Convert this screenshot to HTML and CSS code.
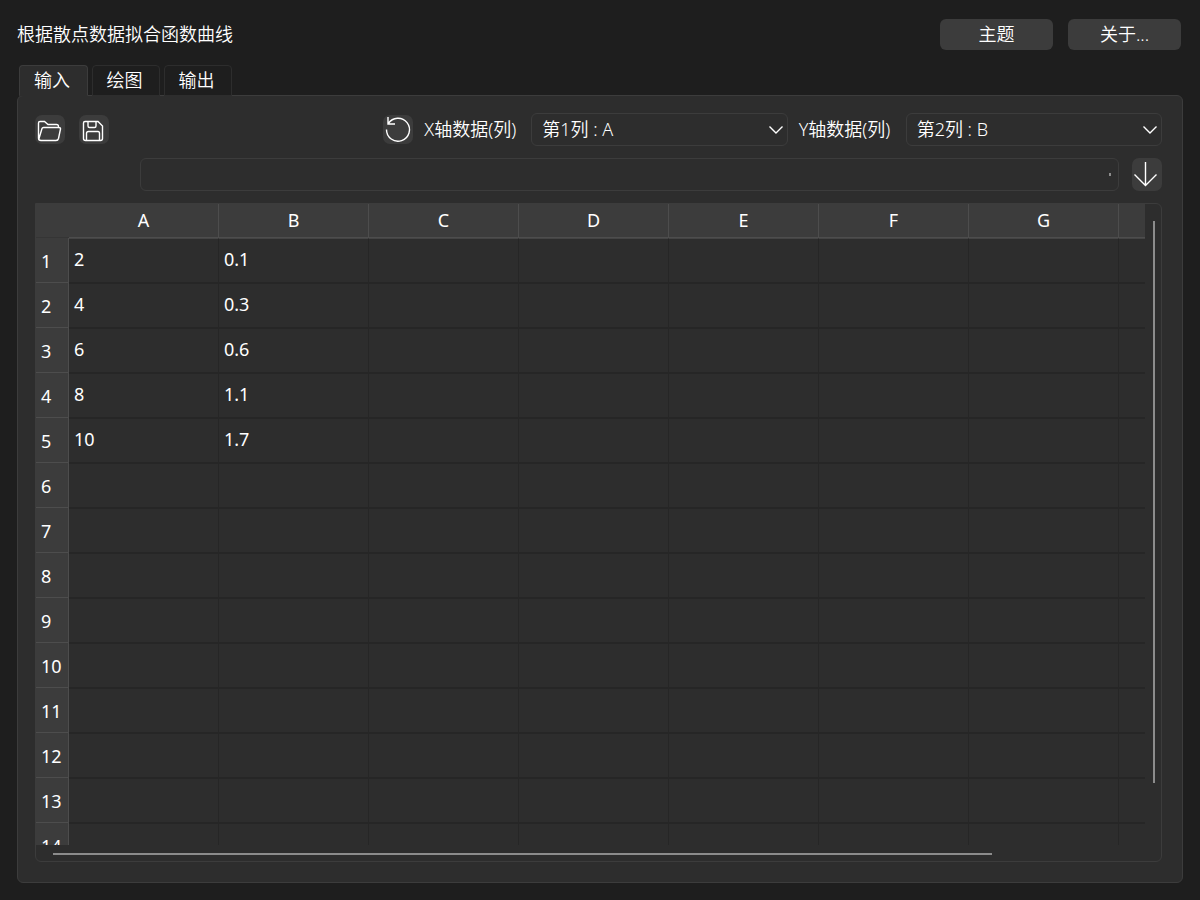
FILE: index.html
```html
<!DOCTYPE html>
<html lang="zh-CN">
<head>
<meta charset="utf-8">
<meta name="viewport" content="width=device-width, initial-scale=1">
<title>根据散点数据拟合函数曲线</title>
<link rel="stylesheet" href="styles.css">
</head>
<body>
<header class="titlebar">
  <h1 class="title">根据散点数据拟合函数曲线</h1>
  <div class="title-actions">
    <button class="button" type="button">主题</button>
    <button class="button" type="button">关于...</button>
  </div>
</header>
<nav class="tabs" role="tablist">
  <button class="tab tab-active" type="button" role="tab" aria-selected="true">输入</button>
  <button class="tab" type="button" role="tab" aria-selected="false">绘图</button>
  <button class="tab" type="button" role="tab" aria-selected="false">输出</button>
</nav>
<main class="panel">
  <div class="toolbar">
    <div class="file-actions">
      <button class="icon-button" type="button" aria-label="打开">
        <svg width="30" height="29" viewBox="0 0 30 29"><path d="M4.500 23.500 3.500 21V8Q3.500 6.500 5 6.500H9.500L13 9.500H21.500Q23.500 9.500 23.500 11.500V12.500M4 23.500 7 13.500Q7.300 12.500 8.500 12.500H23.500Q25.800 12.500 25.500 14L23.500 23.500Q23 25.500 21 25.500H6Q3.500 25.500 3.500 23V20"/></svg>
      </button>
      <button class="icon-button" type="button" aria-label="保存">
        <svg width="30" height="29" viewBox="0 0 30 29"><path d="M4.500 8Q4.500 6.500 6 6.500H19L23.500 11V23.500Q23.500 25.500 21.500 25.500H6.500Q4.500 25.500 4.500 23.500ZM9 6.500V11Q9 12.500 10.500 12.500H15.500Q17 12.500 17 11V6.500M7.500 25.500V18.500Q7.500 16.500 9.500 16.500H19Q20.500 16.500 20.500 18.500V25.500"/></svg>
      </button>
    </div>
    <div class="spacer"></div>
    <button class="icon-button" type="button" aria-label="重置">
      <svg width="30" height="29" viewBox="0 0 30 29"><path d="M5 2V9H12M5.300 8.500A11.500 11.500 0 1 1 3.500 14.500"/></svg>
    </button>
    <label class="field-label" for="x-column">X轴数据(列)</label>
    <div class="select-wrap">
      <select class="select" id="x-column"><option>第1列 : A</option></select>
      <svg class="chevron" width="16" height="10" viewBox="0 0 16 10"><path d="M1.500 1.500 8 8 14.500 1.500"/></svg>
    </div>
    <label class="field-label" for="y-column">Y轴数据(列)</label>
    <div class="select-wrap">
      <select class="select" id="y-column"><option>第2列 : B</option></select>
      <svg class="chevron" width="16" height="10" viewBox="0 0 16 10"><path d="M1.500 1.500 8 8 14.500 1.500"/></svg>
    </div>
  </div>
  <div class="entry-row">
    <div class="entry-wrap">
      <input class="entry" type="text" aria-label="单元格内容">
      <span class="entry-dot"></span>
    </div>
    <button class="icon-button icon-button-tall" type="button" aria-label="填入">
      <svg width="30" height="33" viewBox="0 0 30 33"><path d="M13.500 4V27.500M2.500 16.500 13.500 27.500 24.500 16.500"/></svg>
    </button>
  </div>
  <div class="sheet">
    <div class="viewport">
      <table class="grid">
        <colgroup><col class="col-index"><col class="col"><col class="col"><col class="col"><col class="col"><col class="col"><col class="col"><col class="col"><col class="col"></colgroup>
        <thead>
          <tr><td class="corner"></td><th scope="col">A</th><th scope="col">B</th><th scope="col">C</th><th scope="col">D</th><th scope="col">E</th><th scope="col">F</th><th scope="col">G</th><th scope="col"></th></tr>
        </thead>
        <tbody>
          <tr><th scope="row">1</th><td>2</td><td>0.1</td><td></td><td></td><td></td><td></td><td></td><td></td></tr>
          <tr><th scope="row">2</th><td>4</td><td>0.3</td><td></td><td></td><td></td><td></td><td></td><td></td></tr>
          <tr><th scope="row">3</th><td>6</td><td>0.6</td><td></td><td></td><td></td><td></td><td></td><td></td></tr>
          <tr><th scope="row">4</th><td>8</td><td>1.1</td><td></td><td></td><td></td><td></td><td></td><td></td></tr>
          <tr><th scope="row">5</th><td>10</td><td>1.7</td><td></td><td></td><td></td><td></td><td></td><td></td></tr>
          <tr><th scope="row">6</th><td></td><td></td><td></td><td></td><td></td><td></td><td></td><td></td></tr>
          <tr><th scope="row">7</th><td></td><td></td><td></td><td></td><td></td><td></td><td></td><td></td></tr>
          <tr><th scope="row">8</th><td></td><td></td><td></td><td></td><td></td><td></td><td></td><td></td></tr>
          <tr><th scope="row">9</th><td></td><td></td><td></td><td></td><td></td><td></td><td></td><td></td></tr>
          <tr><th scope="row">10</th><td></td><td></td><td></td><td></td><td></td><td></td><td></td><td></td></tr>
          <tr><th scope="row">11</th><td></td><td></td><td></td><td></td><td></td><td></td><td></td><td></td></tr>
          <tr><th scope="row">12</th><td></td><td></td><td></td><td></td><td></td><td></td><td></td><td></td></tr>
          <tr><th scope="row">13</th><td></td><td></td><td></td><td></td><td></td><td></td><td></td><td></td></tr>
          <tr><th scope="row">14</th><td></td><td></td><td></td><td></td><td></td><td></td><td></td><td></td></tr>
        </tbody>
      </table>
    </div>
    <div class="track-y"><div class="thumb-y"></div></div>
    <div class="track-x"><div class="thumb-x"></div></div>
  </div>
</main>
</body>
</html>
```

FILE: styles.css
```css
* {
  box-sizing: border-box;
}

body {
  margin: 0;
  height: 100vh;
  padding: 19px 17px 17px;
  display: flex;
  flex-direction: column;
  background: #1e1e1e;
  color: #fff;
  font: 350 18px/24px "Noto Sans", "Noto Sans CJK SC", sans-serif;
}

button,
select,
input {
  font: inherit;
  color: inherit;
}

.titlebar {
  display: flex;
  justify-content: space-between;
  align-items: center;
  padding-right: 2px;
  margin-bottom: 15px;
}

.title {
  margin: 0;
  padding-bottom: 2px;
  font: inherit;
}

.title-actions {
  display: flex;
  gap: 15px;
}

.button {
  width: 113px;
  height: 31px;
  padding: 0 0 2px;
  border: 0;
  border-radius: 6px;
  background: #3c3c3c;
}

.tabs {
  display: flex;
  gap: 4px;
  padding-left: 2px;
  margin-bottom: -1px;
  position: relative;
}

.tab {
  width: 68px;
  height: 31px;
  padding: 0 3px 2px 0;
  border: 1px solid #2d2d2d;
  border-radius: 4px 4px 0 0;
  background: #1e1e1e;
}

.tab-active {
  width: 69px;
  border-color: #3c3c3c;
  border-bottom-color: #2d2d2d;
  background: #2d2d2d;
}

.panel {
  flex: 1;
  min-height: 0;
  display: flex;
  flex-direction: column;
  padding: 17px 20px 20px 17px;
  border: 1px solid #3c3c3c;
  border-radius: 6px;
  background: #2d2d2d;
}

.toolbar {
  display: flex;
  align-items: center;
  gap: 11px;
  margin-bottom: 12px;
}

.file-actions {
  display: flex;
  gap: 14px;
}

.spacer {
  flex: 1 1 0;
}

.icon-button {
  flex: none;
  width: 30px;
  height: 29px;
  padding: 0;
  border: 0;
  border-radius: 7px;
  background: #3c3c3c;
}

.icon-button-tall {
  height: 33px;
}

.icon-button svg,
.chevron {
  display: block;
  fill: none;
  stroke: #fff;
  stroke-width: 1.4;
}

.field-label {
  min-width: 96px;
  padding-bottom: 2px;
  white-space: nowrap;
}

.select-wrap {
  flex: 1 1 4px;
  position: relative;
}

.select {
  display: block;
  width: 100%;
  height: 33px;
  padding: 0 30px 2px 10px;
  appearance: none;
  border: 1px solid #3c3c3c;
  border-radius: 6px;
  background: #2d2d2d;
}

.chevron {
  position: absolute;
  right: 4px;
  top: 12px;
  pointer-events: none;
}

.entry-row {
  display: flex;
  gap: 13px;
  padding-left: 105px;
  margin-bottom: 12px;
}

.entry-wrap {
  flex: 1;
  position: relative;
}

.entry {
  display: block;
  width: 100%;
  height: 33px;
  padding: 0 10px;
  border: 1px solid #3c3c3c;
  border-radius: 6px;
  background: #2d2d2d;
}

.entry-dot {
  position: absolute;
  right: 8px;
  top: 15px;
  width: 2px;
  height: 3px;
  background: #8c8c8c;
}

.sheet {
  flex: 1;
  min-height: 0;
  display: grid;
  grid-template: minmax(0, 1fr) 16px / minmax(0, 1fr) 16px;
  border: 1px solid #3c3c3c;
  border-radius: 0 6px 6px 6px;
}

.viewport {
  overflow: hidden;
}

.grid {
  width: 1233px;
  table-layout: fixed;
  border-collapse: separate;
  border-spacing: 0;
  font-weight: 400;
}

.col-index {
  width: 33px;
}

.col {
  width: 150px;
}

.grid th {
  font-weight: inherit;
  background: #3c3c3c;
}

.grid thead th {
  height: 34px;
  padding: 0 0 2px;
  border-right: 1px solid #4d4d4d;
  border-bottom: 1px solid #4d4d4d;
}

.grid .corner {
  padding: 0;
  border-bottom: 1px solid #353535;
  background: #3c3c3c;
}

.grid tbody th {
  height: 45px;
  padding: 1px 0 0 5px;
  text-align: left;
  border-right: 1px solid #4d4d4d;
  border-bottom: 1px solid #4d4d4d;
}

.grid tbody td {
  padding: 0 5px 4px;
  border: solid #262626;
  border-width: 1px 1px 1px 0;
}

.grid tbody tr:first-child td {
  border-top-color: #444;
}

.track-y {
  padding: 17px 0 0 8px;
}

.thumb-y {
  width: 2px;
  height: 90%;
  background: #8c8c8c;
}

.track-x {
  padding: 8px 0 0 17px;
}

.thumb-x {
  width: 86%;
  height: 2px;
  background: #8c8c8c;
}
```
